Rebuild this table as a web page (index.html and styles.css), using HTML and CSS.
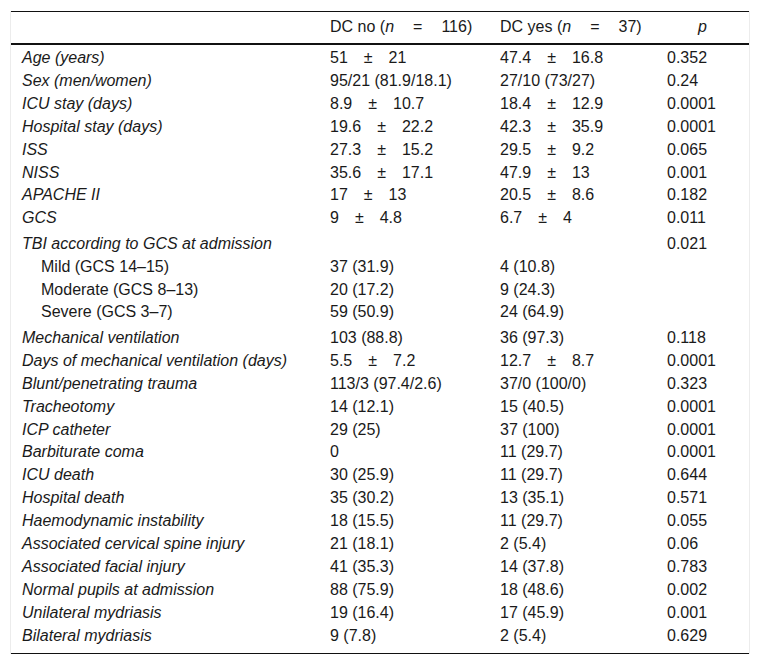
FILE: index.html
```html
<!DOCTYPE html>
<html lang="en">
<head>
<meta charset="utf-8">
<title>Table</title>
<link rel="stylesheet" href="styles.css">
</head>
<body>
<div class="frame">
<table class="data">
  <colgroup>
    <col class="c-label"><col class="c-no"><col class="c-yes"><col class="c-p">
  </colgroup>
  <thead>
    <tr>
      <th></th>
      <th>DC no (<i>n</i><span class="eq">=</span>116)</th>
      <th>DC yes (<i>n</i><span class="eq">=</span>37)</th>
      <th class="pcol"><i>p</i></th>
    </tr>
  </thead>
  <tbody>
    <tr class="first"><td class="lab">Age (years)</td><td>51<span class="pm">±</span>21</td><td>47.4<span class="pm">±</span>16.8</td><td>0.352</td></tr>
    <tr><td class="lab">Sex (men/women)</td><td>95/21 (81.9/18.1)</td><td>27/10 (73/27)</td><td>0.24</td></tr>
    <tr><td class="lab">ICU stay (days)</td><td>8.9<span class="pm">±</span>10.7</td><td>18.4<span class="pm">±</span>12.9</td><td>0.0001</td></tr>
    <tr><td class="lab">Hospital stay (days)</td><td>19.6<span class="pm">±</span>22.2</td><td>42.3<span class="pm">±</span>35.9</td><td>0.0001</td></tr>
    <tr><td class="lab">ISS</td><td>27.3<span class="pm">±</span>15.2</td><td>29.5<span class="pm">±</span>9.2</td><td>0.065</td></tr>
    <tr><td class="lab">NISS</td><td>35.6<span class="pm">±</span>17.1</td><td>47.9<span class="pm">±</span>13</td><td>0.001</td></tr>
    <tr><td class="lab">APACHE II</td><td>17<span class="pm">±</span>13</td><td>20.5<span class="pm">±</span>8.6</td><td>0.182</td></tr>
    <tr><td class="lab">GCS</td><td>9<span class="pm">±</span>4.8</td><td>6.7<span class="pm">±</span>4</td><td>0.011</td></tr>
    <tr class="grp"><td class="lab">TBI according to GCS at admission</td><td></td><td></td><td>0.021</td></tr>
    <tr><td class="sub">Mild (GCS 14–15)</td><td>37 (31.9)</td><td>4 (10.8)</td><td></td></tr>
    <tr><td class="sub">Moderate (GCS 8–13)</td><td>20 (17.2)</td><td>9 (24.3)</td><td></td></tr>
    <tr><td class="sub">Severe (GCS 3–7)</td><td>59 (50.9)</td><td>24 (64.9)</td><td></td></tr>
    <tr class="grp"><td class="lab">Mechanical ventilation</td><td>103 (88.8)</td><td>36 (97.3)</td><td>0.118</td></tr>
    <tr><td class="lab">Days of mechanical ventilation (days)</td><td>5.5<span class="pm">±</span>7.2</td><td>12.7<span class="pm">±</span>8.7</td><td>0.0001</td></tr>
    <tr><td class="lab">Blunt/penetrating trauma</td><td>113/3 (97.4/2.6)</td><td>37/0 (100/0)</td><td>0.323</td></tr>
    <tr><td class="lab">Tracheotomy</td><td>14 (12.1)</td><td>15 (40.5)</td><td>0.0001</td></tr>
    <tr><td class="lab">ICP catheter</td><td>29 (25)</td><td>37 (100)</td><td>0.0001</td></tr>
    <tr><td class="lab">Barbiturate coma</td><td>0</td><td>11 (29.7)</td><td>0.0001</td></tr>
    <tr><td class="lab">ICU death</td><td>30 (25.9)</td><td>11 (29.7)</td><td>0.644</td></tr>
    <tr><td class="lab">Hospital death</td><td>35 (30.2)</td><td>13 (35.1)</td><td>0.571</td></tr>
    <tr><td class="lab">Haemodynamic instability</td><td>18 (15.5)</td><td>11 (29.7)</td><td>0.055</td></tr>
    <tr><td class="lab">Associated cervical spine injury</td><td>21 (18.1)</td><td>2 (5.4)</td><td>0.06</td></tr>
    <tr><td class="lab">Associated facial injury</td><td>41 (35.3)</td><td>14 (37.8)</td><td>0.783</td></tr>
    <tr><td class="lab">Normal pupils at admission</td><td>88 (75.9)</td><td>18 (48.6)</td><td>0.002</td></tr>
    <tr><td class="lab">Unilateral mydriasis</td><td>19 (16.4)</td><td>17 (45.9)</td><td>0.001</td></tr>
    <tr class="last"><td class="lab">Bilateral mydriasis</td><td>9 (7.8)</td><td>2 (5.4)</td><td>0.629</td></tr>
  </tbody>
</table>
</div>
</body>
</html>
```

FILE: styles.css
```css
html, body {
  margin: 0;
  padding: 0;
  background: #ffffff;
}

body {
  font-family: "Liberation Sans", Arial, sans-serif;
  font-size: 16px;
  color: #1a1a1a;
}

.frame {
  margin: 11px 0 0 10px;
  width: 738px;
  border-left: 1px solid #ececec;
  border-right: 1px solid #ececec;
}

.data {
  width: 738px;
  border-collapse: collapse;
  table-layout: fixed;
  border-top: 1px solid #111;
  border-bottom: 1px solid #111;
}

.c-label { width: 308px; }
.c-no { width: 170px; }
.c-yes { width: 167px; }
.c-p { width: 93px; }

.data th {
  font-weight: normal;
  text-align: left;
  padding: 6px 11px 7px;
  line-height: 18px;
  border-bottom: 2px solid #111;
  white-space: nowrap;
}

.data th.pcol {
  text-align: center;
}

.data td {
  padding: 2px 11px;
  line-height: 18.9px;
  text-align: left;
  vertical-align: top;
  white-space: nowrap;
}

.data td.lab {
  font-style: italic;
}

.data td.sub {
  padding-left: 30px;
}

.data tr.first td {
  padding-top: 4px;
}

.data tr.grp td {
  padding-top: 4.5px;
}

.data tr.last td {
  padding-bottom: 7px;
}

.eq {
  margin: 0 19px;
}

.pm {
  margin: 0 16px;
}
```
